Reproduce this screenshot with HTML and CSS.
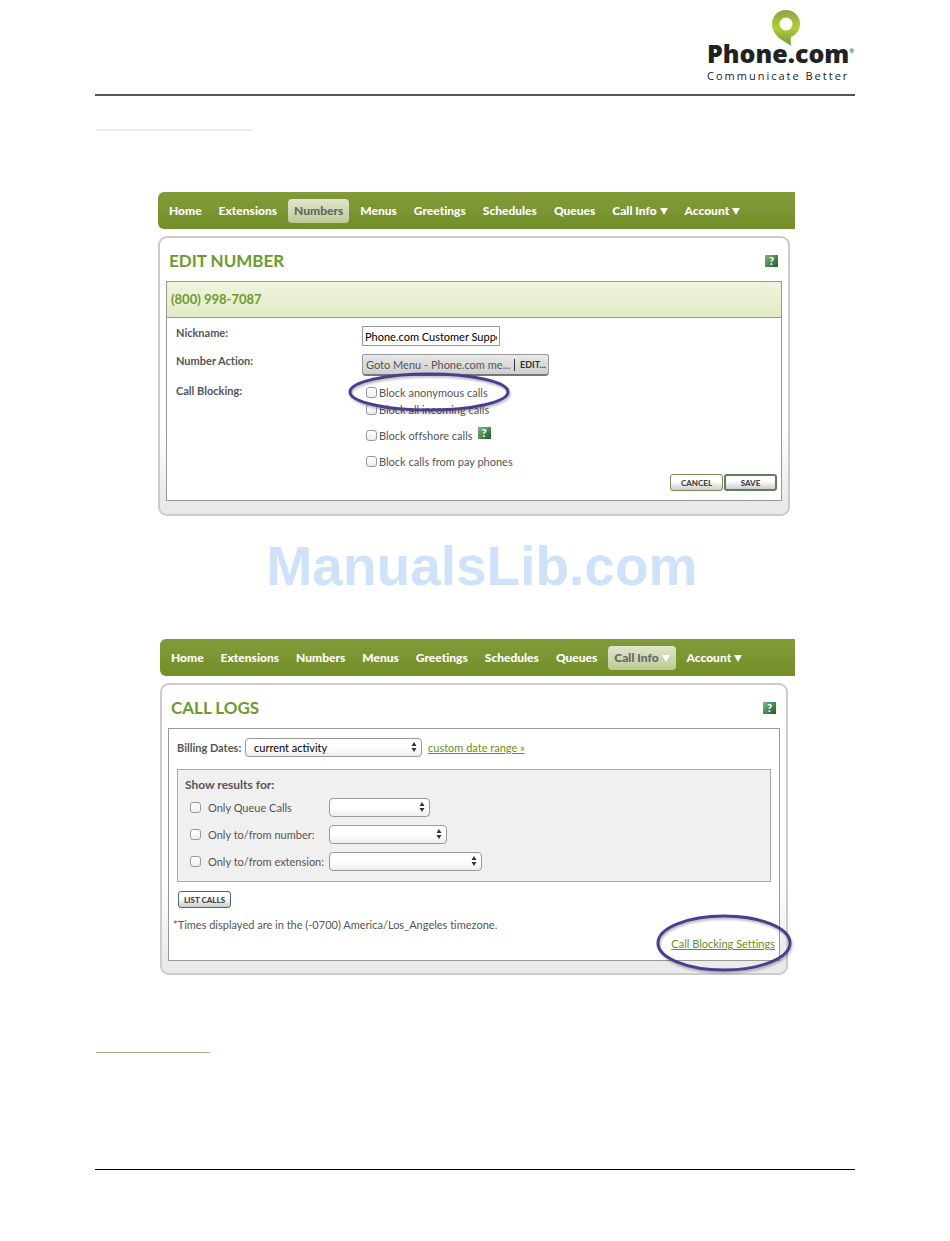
FILE: index.html
```html
<!DOCTYPE html>
<html lang="en">

<head>
    <meta charset="UTF-8">
    <meta name="viewport" content="width=device-width, initial-scale=1.0">
    <title>Phone.com - Call Blocking</title>
    <link rel="stylesheet" href="styles.css">
</head>

<body>
    <header class="page-header">
        <div class="logo">
            <svg class="logo-pin" viewBox="0 0 28 37" width="28" height="37">
                <defs>
                    <linearGradient id="pin" x1="0" y1="0" x2="0" y2="1">
                        <stop offset="0" stop-color="#8aa63c" />
                        <stop offset="0.5" stop-color="#b2cc38" />
                        <stop offset="1" stop-color="#6f9a3a" />
                    </linearGradient>
                </defs>
                <path fill="url(#pin)" fill-rule="evenodd" d="M14 0C6 0 0 6 0 14c0 6 3 10 7 14 4 3 8 5 12.500 8-1-3-1-6-.5-9C24 25 28 20 28 14 28 6 22 0 14 0zM14 7.500a6.500 6.500 0 1 1 0 13 6.500 6.500 0 0 1 0-13z" />
            </svg>
            <div class="logo-name">Phone.com<sup>®</sup></div>
            <div class="logo-tagline">Communicate Better</div>
        </div>
    </header>

    <main>
        <div class="rule rule-top"></div>

        <section class="screen">
            <nav>
                <a href="#">Home</a>
                <a href="#">Extensions</a>
                <a href="#" class="active">Numbers</a>
                <a href="#">Menus</a>
                <a href="#">Greetings</a>
                <a href="#">Schedules</a>
                <a href="#">Queues</a>
                <a href="#">Call Info <i class="caret"></i></a>
                <a href="#">Account <i class="caret"></i></a>
            </nav>

            <div class="panel">
                <div class="panel-title">
                    <h2>EDIT NUMBER</h2>
                    <button class="help" type="button">?</button>
                </div>
                <form class="box">
                    <h3>(800) 998-7087</h3>
                    <div class="fields">
                        <label class="field-label" for="nickname">Nickname:</label>
                        <input class="nickname" id="nickname" type="text" value="Phone.com Customer Support">

                        <span class="field-label">Number Action:</span>
                        <div class="action">
                            <span>Goto Menu - Phone.com me...</span>
                            <button type="button">EDIT...</button>
                        </div>

                        <span class="field-label">Call Blocking:</span>
                        <div class="checks">
                            <div class="check">
                                <input type="checkbox" id="anonymous"><label for="anonymous">Block anonymous calls</label>
                                <svg class="mark mark-anonymous" viewBox="0 0 164 44" width="164" height="44">
                                    <ellipse cx="81" cy="20" rx="79" ry="18" />
                                </svg>
                            </div>
                            <div class="check">
                                <input type="checkbox" id="incoming"><label for="incoming">Block all incoming calls</label>
                            </div>
                            <div class="check spaced">
                                <input type="checkbox" id="offshore"><label for="offshore">Block offshore calls</label>
                                <button class="help" type="button">?</button>
                            </div>
                            <div class="check spaced">
                                <input type="checkbox" id="payphones"><label for="payphones">Block calls from pay phones</label>
                            </div>
                        </div>
                    </div>
                    <div class="buttons">
                        <button class="btn" type="button">CANCEL</button>
                        <button class="btn btn-save" type="button">SAVE</button>
                    </div>
                </form>
            </div>
        </section>

        <div class="watermark">ManualsLib.com</div>

        <section class="screen screen-logs">
            <nav>
                <a href="#">Home</a>
                <a href="#">Extensions</a>
                <a href="#">Numbers</a>
                <a href="#">Menus</a>
                <a href="#">Greetings</a>
                <a href="#">Schedules</a>
                <a href="#">Queues</a>
                <a href="#" class="active">Call Info <i class="caret"></i></a>
                <a href="#">Account <i class="caret"></i></a>
            </nav>

            <div class="panel">
                <div class="panel-title">
                    <h2>CALL LOGS</h2>
                    <button class="help" type="button">?</button>
                </div>
                <form class="box logs">
                    <div class="dates">
                        <label class="field-label" for="dates">Billing Dates:</label>
                        <div class="select select-dates">
                            <select id="dates">
                                <option>current activity</option>
                            </select>
                            <svg viewBox="0 0 6 10" width="6" height="10"><path d="M3 0l2.500 4h-5zM3 10l2.500-4h-5z" /></svg>
                        </div>
                        <a href="#">custom date range »</a>
                    </div>

                    <fieldset class="filters">
                        <legend>Show results for:</legend>
                        <div class="filter">
                            <input type="checkbox" id="queue"><label for="queue">Only Queue Calls</label>
                            <div class="select select-queue">
                                <select aria-label="Queue"><option></option></select>
                                <svg viewBox="0 0 6 10" width="6" height="10"><path d="M3 0l2.500 4h-5zM3 10l2.500-4h-5z" /></svg>
                            </div>
                        </div>
                        <div class="filter">
                            <input type="checkbox" id="number"><label for="number">Only to/from number:</label>
                            <div class="select select-number">
                                <select aria-label="Number"><option></option></select>
                                <svg viewBox="0 0 6 10" width="6" height="10"><path d="M3 0l2.500 4h-5zM3 10l2.500-4h-5z" /></svg>
                            </div>
                        </div>
                        <div class="filter">
                            <input type="checkbox" id="extension"><label for="extension">Only to/from extension:</label>
                            <div class="select select-extension">
                                <select aria-label="Extension"><option></option></select>
                                <svg viewBox="0 0 6 10" width="6" height="10"><path d="M3 0l2.500 4h-5zM3 10l2.500-4h-5z" /></svg>
                            </div>
                        </div>
                    </fieldset>

                    <button class="btn btn-list" type="button">LIST CALLS</button>
                    <p>*Times displayed are in the (-0700) America/Los_Angeles timezone.</p>
                    <div class="settings">
                        <a href="#">Call Blocking Settings</a>
                        <svg class="mark mark-settings" viewBox="0 0 138 62" width="138" height="62">
                            <ellipse cx="68" cy="29" rx="66" ry="27" />
                        </svg>
                    </div>
                </form>
            </div>
        </section>

        <div class="rule rule-bottom"></div>
    </main>

    <footer></footer>
</body>

</html>
```
FILE: styles.css
```css
* {
    box-sizing: border-box;
}

body {
    margin: 0 10%;
    background: #fff;
    color: #555;
    font-family: Lato, sans-serif;
    font-size: 11px;
    font-variant-ligatures: none;
    line-height: 16px;
}

h2,
h3,
p {
    margin: 0;
}

button,
input,
select {
    margin: 0;
    font-family: inherit;
}

a {
    color: #688e23;
}

.page-header {
    display: flex;
    justify-content: flex-end;
    height: 96px;
    border-bottom: 2px solid #555;
}

.logo {
    position: relative;
    width: 148px;
    padding-top: 36px;
    color: #222;
    font-family: "Open Sans", sans-serif;
}

.logo-pin {
    position: absolute;
    top: 10px;
    left: 65px;
}

.logo-name {
    display: flex;
    font-size: 25px;
    font-weight: 800;
    line-height: 34px;
    white-space: nowrap;
}

.logo-name sup {
    padding-top: 7px;
    font-size: 6px;
    font-weight: 400;
    line-height: 16px;
}

.logo-tagline {
    font-size: 11px;
    line-height: 12px;
    letter-spacing: 2px;
    white-space: nowrap;
}

.rule {
    height: 1px;
}

.rule-top {
    width: 157px;
    height: 2px;
    margin: 33px 0 61px 1px;
    background: #eef0e2;
}

.rule-bottom {
    width: 114px;
    margin: 77px 0 0 1px;
    background: #a5aa80;
}

.screen {
    margin: 0 60px 0 63px;
}

.screen-logs {
    margin-left: 65px;
}

nav {
    display: flex;
    align-items: center;
    gap: 5px;
    height: 37px;
    padding-left: 5px;
    border-radius: 6px 0 0 6px;
    background: linear-gradient(#819b3a, #738f28);
}

nav a {
    padding: 4px 6px;
    border-radius: 4px;
    color: #fff;
    font-size: 12px;
    font-weight: 900;
    text-decoration: none;
    white-space: nowrap;
}

nav a.active {
    background: linear-gradient(#dfe6cc, #bccb95);
    color: #666;
}

.caret {
    display: inline-block;
    border: 4px solid transparent;
    border-top: 7px solid #fff;
    border-bottom: 0;
}

.panel {
    margin: 7px 5px 0 0;
    padding: 7px 6px 13px;
    border: 2px solid #ccc;
    border-radius: 9px;
    background: linear-gradient(#fff 70%, #eaeaea 94%);
}

.screen-logs .panel {
    margin-right: 7px;
    padding-bottom: 12px;
}

.panel-title {
    display: flex;
    align-items: center;
    justify-content: space-between;
    height: 36px;
    padding: 0 4px 4px 3px;
}

h2 {
    color: #6d9a2c;
    font-size: 17px;
    font-weight: 700;
    line-height: 24px;
}

.help {
    width: 13px;
    height: 12px;
    padding: 0;
    border: 0;
    background: linear-gradient(135deg, #7fb87f, #1d5c2a);
    color: #fff;
    font-size: 11px;
    font-weight: 900;
    line-height: 12px;
}

.box {
    border: 1px solid #999;
    background: #fff;
}

h3 {
    padding: 0 4px;
    border-bottom: 1px solid #999;
    background: linear-gradient(#eff4de, #e1ebc4);
    color: #6d9a2c;
    font-size: 13px;
    font-weight: 700;
    line-height: 35px;
}

.fields {
    display: grid;
    grid-template-columns: 186px 1fr;
    row-gap: 8px;
    padding: 8px 9px 0;
}

.field-label {
    font-weight: 700;
    line-height: 14px;
}

.nickname {
    width: 138px;
    height: 20px;
    padding: 0 2px;
    border: 1px solid #999;
    color: #000;
    font-size: 11px;
}

.action {
    display: flex;
    align-items: center;
    width: 187px;
    height: 22px;
    padding-left: 3px;
    border: 1px solid #999;
    border-bottom: 2px solid #777;
    border-radius: 2px 3px 4px 4px;
    background: linear-gradient(#e8e8e8, #cfcfcf);
    white-space: nowrap;
}

.action span {
    flex: 1;
}

.action button {
    height: 12px;
    padding: 0 2px 0 5px;
    border: 0;
    border-left: 1px solid #333;
    background: none;
    color: #333;
    font-size: 9px;
    font-weight: 700;
    line-height: 12px;
}

.checks {
    padding-left: 4px;
}

.check {
    display: flex;
    align-items: center;
    position: relative;
    height: 17px;
}

.check label {
    padding-left: 2px;
}

.check .help {
    margin: 0 0 5px 5px;
}

.check.spaced {
    margin-top: 9px;
}

input[type="checkbox"] {
    appearance: none;
    width: 11px;
    height: 11px;
    border: 1px solid #999;
    border-radius: 3px;
    background: linear-gradient(#fff, #eee);
}

.mark {
    position: absolute;
    z-index: 1;
    fill: none;
    stroke: #4c3d8f;
    stroke-width: 3;
    filter: drop-shadow(1px 2px 1px #0004);
    pointer-events: none;
}

.mark-anonymous {
    top: -12px;
    left: -18px;
}

.buttons {
    display: flex;
    justify-content: flex-end;
    gap: 1px;
    padding: 4px 4px 9px;
}

.btn {
    width: 53px;
    height: 17px;
    padding: 0;
    border: 1px solid #7a8a55;
    border-radius: 3px;
    background: linear-gradient(#fff 40%, #ccc);
    color: #444;
    font-size: 8px;
    font-weight: 900;
    line-height: 12px;
    white-space: nowrap;
}

.btn-save {
    border: 2px solid #5f7f5f;
}

.btn-list {
    display: block;
    margin: 9px 0 0 9px;
    border-color: #47688a;
}

.watermark {
    margin: 19px 0 41px;
    padding-left: 14px;
    color: #cfe2fa;
    font: 700 55px/63px "Liberation Sans", sans-serif;
    text-align: center;
}

.dates {
    display: flex;
    align-items: center;
    gap: 6px;
    padding: 9px 8px 12px;
}

.dates .field-label {
    width: 62px;
    white-space: nowrap;
}

.select {
    position: relative;
    height: 19px;
}

.select select {
    appearance: none;
    width: 100%;
    height: 100%;
    padding: 0 8px;
    border: 1px solid #999;
    border-radius: 4px;
    background: linear-gradient(#fff, #fff 50%, #eee);
    color: #000;
    font-size: 11px;
}

.select svg {
    position: absolute;
    top: 4px;
    right: 5px;
    fill: #333;
}

.select-dates {
    width: 177px;
}

.select-queue {
    width: 101px;
}

.select-number {
    width: 118px;
}

.select-extension {
    width: 153px;
}

.filters {
    margin: 0 8px;
    padding: 7px 7px 10px;
    border: 1px solid #aaa;
    background: #f0f0f0;
}

.filters legend {
    float: left;
    width: 100%;
    margin-bottom: 5px;
    padding: 0;
    font-size: 12px;
    font-weight: 700;
}

.filter {
    display: flex;
    align-items: center;
    clear: both;
    padding-left: 5px;
}

.filter + .filter {
    margin-top: 8px;
}

.filter label {
    width: 128px;
    padding-left: 7px;
    white-space: nowrap;
}

.logs p {
    padding: 9px 4px 0;
}

.settings {
    position: relative;
    padding: 3px 4px 8px;
    text-align: right;
}

.mark-settings {
    top: -19px;
    right: -15px;
}

footer {
    height: 72px;
    margin-top: 116px;
    border-top: 1px solid #000;
}
```
